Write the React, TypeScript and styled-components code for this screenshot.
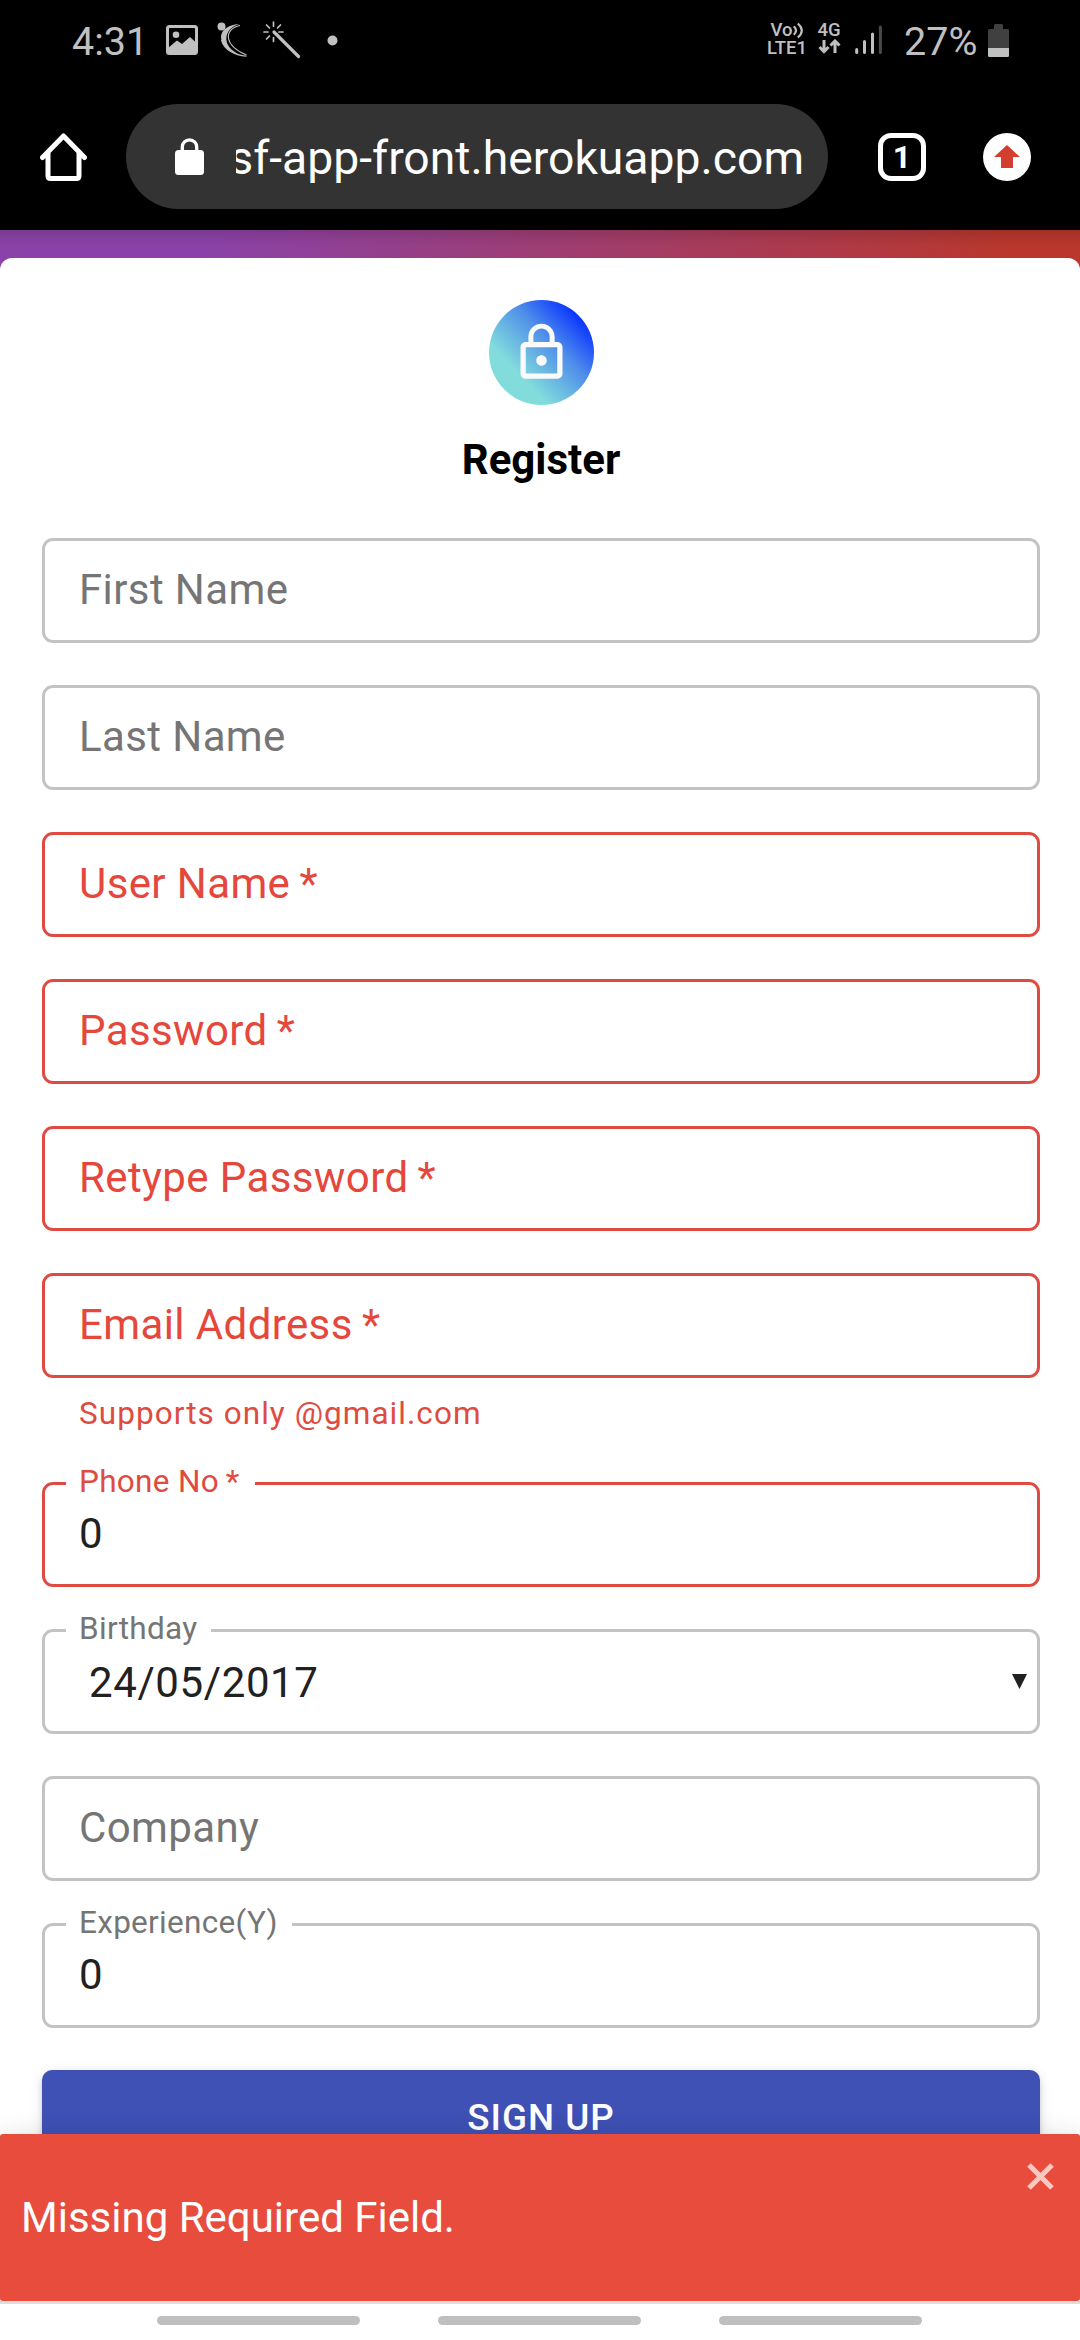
import React from "react";
import styled, { createGlobalStyle } from "styled-components";

const GlobalStyle = createGlobalStyle`
  * { box-sizing: border-box; }
  body { margin: 0; background: #fff; font-family: Roboto, "Noto Sans", sans-serif; }
`;

const Screen = styled.div`
  position: relative;
  display: flex;
  flex-direction: column;
  width: 1080px;
  height: 2340px;
  overflow: hidden;
  background: #fff;
`;

/* ---------- status bar ---------- */

const StatusBar = styled.header`
  display: flex;
  justify-content: space-between;
  height: 84px;
  padding: 0 71px 0 72px;
  flex: none;
  background: #000;
  color: #c0c0c0;
`;

const StatusGroup = styled.div`
  display: flex;
  align-items: center;
  height: 80px;
`;

const StatusText = styled.span<{ $width: number; $indent?: number }>`
  width: ${(p) => p.$width}px;
  font-size: 39.5px;
  line-height: 46px;
  padding: 4px 0 0 ${(p) => p.$indent ?? 0}px;
  white-space: nowrap;
`;

const StatusIcon = styled.svg<{ $left?: number }>`
  display: block;
  flex: none;
  margin-left: ${(p) => p.$left ?? 0}px;
`;

const NetworkStack = styled.div<{ $width: number; $left?: number }>`
  display: flex;
  flex-direction: column;
  align-items: center;
  width: ${(p) => p.$width}px;
  margin-left: ${(p) => p.$left ?? 0}px;
  height: 38px;
  font-size: 18.5px;
  font-weight: 500;
  line-height: 18px;
  white-space: nowrap;
`;

const NetworkLine = styled.div`
  display: flex;
  align-items: center;
  height: 18px;
`;

/* ---------- browser bar ---------- */

const BrowserBar = styled.nav`
  display: flex;
  align-items: center;
  height: 146px;
  padding: 0 48px 1px 40px;
  flex: none;
  background: #000;
`;

const AddressPill = styled.div`
  display: flex;
  align-items: center;
  flex: none;
  width: 702px;
  height: 105px;
  margin-left: 39px;
  padding-left: 49px;
  border-radius: 53px;
  background: #333;
`;

const AddressText = styled.div`
  display: flex;
  justify-content: flex-end;
  width: 568px;
  margin-left: 32px;
  overflow: hidden;
  color: #fff;
  font-size: 46.3px;
  line-height: 56px;
  padding-top: 3px;
  white-space: nowrap;
`;

const TabCount = styled.div`
  display: flex;
  align-items: center;
  justify-content: center;
  width: 48px;
  height: 48px;
  margin-left: 50px;
  border: 5px solid #fff;
  border-radius: 13px;
  color: #fff;
  font-size: 32px;
  font-weight: 700;
  line-height: 36px;
`;

const UpdateBadge = styled.div`
  display: flex;
  align-items: center;
  justify-content: center;
  width: 48px;
  height: 48px;
  margin-left: 57px;
  border-radius: 50%;
  background: #fff;
`;

/* ---------- page ---------- */

const Page = styled.main`
  flex: 1;
  min-height: 0;
  padding-top: 28px;
  overflow: hidden;
  background: linear-gradient(rgba(0, 0, 0, 0.12), rgba(0, 0, 0, 0) 16px) no-repeat,
    linear-gradient(92deg, #8a42a8 18%, #b9372d 87%);
`;

const Card = styled.section`
  display: flex;
  flex-direction: column;
  align-items: center;
  height: 2100px;
  padding: 42px 40px 0 42px;
  border-radius: 12px;
  background: #fff;
`;

const Avatar = styled.div`
  display: flex;
  align-items: center;
  justify-content: center;
  width: 105px;
  height: 105px;
  flex: none;
  border-radius: 50%;
  background: linear-gradient(46deg, #82dcdc 29%, #4f8eea 60%, #0a36ff 85%);
`;

const Title = styled.h1`
  height: 62px;
  margin: 27px 0 44px;
  flex: none;
  color: #000;
  font-size: 42px;
  font-weight: 700;
  line-height: 56px;
`;

const Form = styled.form`
  display: flex;
  flex-direction: column;
  width: 100%;
  gap: 42px;
`;

const FieldBox = styled.div<{ $error?: boolean }>`
  position: relative;
  display: flex;
  align-items: flex-start;
  justify-content: space-between;
  height: 105px;
  padding: 24px 10px 0 34px;
  flex: none;
  border: 3px solid ${(p) => (p.$error ? "#df4b40" : "#c3c3c3")};
  border-radius: 11px;
  background: #fff;
`;

const FieldText = styled.span<{ $tone: "label" | "error" | "value"; $date?: boolean }>`
  padding: ${(p) => (p.$date ? "2px 0 0 10px" : "0")};
  color: ${(p) => ({ label: "#757575", error: "#e5473c", value: "#212121" })[p.$tone]};
  font-size: 42px;
  line-height: 49px;
  letter-spacing: ${(p) => (p.$date ? "0.6px" : "0.394px")};
  white-space: pre;
`;

const FloatingLabel = styled.span<{ $error?: boolean; $width: number }>`
  position: absolute;
  top: -23px;
  left: 21px;
  width: ${(p) => p.$width}px;
  padding-left: 13px;
  background: #fff;
  color: ${(p) => (p.$error ? "#df4b40" : "#757575")};
  font-size: 31.5px;
  line-height: 40px;
  letter-spacing: 0.3px;
  white-space: pre;
`;

const RequiredMark = styled.span`
  margin-left: -0.04em;
`;

const HelperText = styled.p`
  height: 62px;
  margin: 0;
  padding: 15px 0 0 37px;
  color: #df4b40;
  font-size: 31.5px;
  line-height: 42px;
  letter-spacing: 1.05px;
`;

const FieldGroup = styled.div`
  display: flex;
  flex-direction: column;
  height: 167px;
`;

const DropArrow = styled.svg`
  display: block;
  margin-top: 18px;
`;

const SubmitButton = styled.button`
  height: 96px;
  padding: 0;
  border: 0;
  border-radius: 10px;
  background: #3f51b5;
  box-shadow: 0 8px 3px -5px rgba(0, 0, 0, 0.2), 0 5px 5px rgba(0, 0, 0, 0.14),
    0 3px 13px rgba(0, 0, 0, 0.12);
  color: #fff;
  font-family: inherit;
  font-size: 36.75px;
  font-weight: 500;
  line-height: 64px;
  letter-spacing: 1.05px;
`;

/* ---------- toast and system navigation ---------- */

const Toast = styled.div`
  position: absolute;
  top: 2134px;
  left: 0;
  display: flex;
  align-items: center;
  justify-content: space-between;
  width: 1080px;
  height: 167px;
  padding: 0 26px 0 21px;
  border-radius: 3px;
  background: #e74c3c;
  box-shadow: 0 3px 26px rgba(0, 0, 0, 0.1), 0 5px 39px rgba(0, 0, 0, 0.05);
`;

const ToastText = styled.div`
  color: #fff;
  font-size: 42px;
  line-height: 50px;
`;

const ToastClose = styled.svg`
  display: block;
  align-self: flex-start;
  margin-top: 29px;
`;

const SystemNav = styled.footer`
  position: absolute;
  bottom: 0;
  left: 0;
  display: flex;
  gap: 78px;
  width: 1080px;
  height: 39px;
  padding: 12px 157px 0;
  border-top: 3px solid #e0dcdc;
  background: #fff;
`;

const NavHandle = styled.span`
  width: 203px;
  height: 9px;
  border-radius: 5px;
  background: #bfbfbf;
`;

type FieldProps = {
  label: string;
  required?: boolean;
  value?: string;
  error?: boolean;
  notch?: number;
  date?: boolean;
};

function Field({ label, required, value, error, notch = 0, date }: FieldProps) {
  const caption = (
    <>
      {label}
      {required && <RequiredMark>{" *"}</RequiredMark>}
    </>
  );
  return (
    <FieldBox $error={error}>
      {value === undefined ? (
        <FieldText $tone={error ? "error" : "label"}>{caption}</FieldText>
      ) : (
        <>
          <FloatingLabel $error={error} $width={notch}>
            {caption}
          </FloatingLabel>
          <FieldText $tone="value" $date={date}>
            {value}
          </FieldText>
        </>
      )}
      {date && (
        <DropArrow width="15" height="15" viewBox="0 0 15 15">
          <path d="M0 0h15L7.500 15z" fill="#212121" />
        </DropArrow>
      )}
    </FieldBox>
  );
}

export default function App() {
  return (
    <>
      <GlobalStyle />
      <Screen>
        <StatusBar>
          <StatusGroup>
            <StatusText $width={94}>4:31</StatusText>
            <StatusIcon width="32" height="30" viewBox="0 0 32 30">
              <rect x="1.5" y="1.5" width="29" height="27" rx="2" fill="none" stroke="#c0c0c0" strokeWidth="3" />
              <circle cx="10" cy="9.700" r="3.300" fill="#c0c0c0" />
              <path d="M2 23l9-7.500 5 3.500 8-7 6 5.500V28H2z" fill="#c0c0c0" />
            </StatusIcon>
            <StatusIcon $left={19} width="32" height="36" viewBox="0 0 32 36">
              <circle cx="4.500" cy="4.500" r="4" fill="#c0c0c0" />
              <path
                d="M22.500 2C14 2 4 7 4 15c0 9 9 15.500 19 18C15 29 8 23 9.500 14.500 11 7.500 16 4 22.500 2z"
                fill="#c0c0c0"
              />
              <path
                d="M23 3.500C15 5 10.500 10 11.500 16.500 13 24 20 29 29.500 33M4.500 18C7 28 18 33 29.500 34.300"
                fill="none"
                stroke="#c0c0c0"
                strokeWidth="1.100"
              />
            </StatusIcon>
            <StatusIcon $left={14} width="38" height="38" viewBox="0 0 38 38">
              <g stroke="#c0c0c0" strokeLinecap="round" fill="none">
                <path d="M11 11L35.500 35.500" strokeWidth="3.200" />
                <path
                  d="M10.500 1.200v4M10.500 16.500v4M1 11h4M16 11h4M3.500 4l3 3M17.500 4l-3 3M3.500 18l3-3"
                  strokeWidth="1.700"
                />
              </g>
            </StatusIcon>
            <StatusIcon $left={26} width="11" height="11" viewBox="0 0 11 11">
              <circle cx="5.500" cy="5.500" r="5" fill="#c0c0c0" />
            </StatusIcon>
          </StatusGroup>
          <StatusGroup>
            <NetworkStack $width={40}>
              <NetworkLine>
                Vo
                <svg width="11" height="17" viewBox="0 0 11 17">
                  <path
                    d="M0.800 4.200q4.400 4.300 0 8.600M4.800 1.500q8 7 0 14"
                    fill="none"
                    stroke="#c0c0c0"
                    strokeWidth="2.200"
                  />
                </svg>
              </NetworkLine>
              <NetworkLine>LTE1</NetworkLine>
            </NetworkStack>
            <NetworkStack $width={24} $left={10}>
              <NetworkLine>4G</NetworkLine>
              <svg width="23" height="15" viewBox="0 0 23 15">
                <path
                  d="M6 1v12M1.500 8L6 12.700 10.500 8M17 14V2M12.500 6.500L17 2l4.500 4.500"
                  fill="none"
                  stroke="#c0c0c0"
                  strokeWidth="3"
                />
              </svg>
            </NetworkStack>
            <StatusIcon $left={14} width="28" height="30" viewBox="0 0 28 30">
              <g strokeWidth="3" strokeLinecap="round" stroke="#c0c0c0">
                <path d="M1.700 24.500v3M9.500 16.500v11M17.500 9v18.500" />
                <path d="M25.400 2v25.500" stroke="#4a4a4a" />
              </g>
            </StatusIcon>
            <StatusText $width={105} $indent={21}>
              27%
            </StatusText>
            <StatusIcon width="21" height="33" viewBox="0 0 21 33">
              <path d="M6 5V1.500Q6 0 7.500 0h6Q15 0 15 1.500V5h4.500Q21 5 21 6.500V24H0V6.500Q0 5 1.500 5z" fill="#404040" />
              <path d="M0 24h21v7.500q0 1.500-1.500 1.500h-18Q0 33 0 31.500z" fill="#c0c0c0" />
            </StatusIcon>
          </StatusGroup>
        </StatusBar>

        <BrowserBar>
          <svg width="47" height="48" viewBox="0 0 47 48">
            <path
              d="M2.500 24.500L23.500 3l21 21.500M8 20v23q0 2.500 2.500 2.500h26Q39 45.500 39 43V20"
              fill="none"
              stroke="#fff"
              strokeWidth="5"
              strokeLinecap="round"
              strokeLinejoin="round"
            />
          </svg>
          <AddressPill>
            <svg width="29" height="37" viewBox="0 0 29 37">
              <rect y="12" width="29" height="25" rx="3.500" fill="#fff" />
              <path d="M7.300 14V9a7.200 7.200 0 0 1 14.400 0v5" fill="none" stroke="#fff" strokeWidth="3.300" />
            </svg>
            <AddressText>sf-app-front.herokuapp.com</AddressText>
          </AddressPill>
          <TabCount>1</TabCount>
          <UpdateBadge>
            <svg width="26" height="23" viewBox="0 0 26 23">
              <path d="M13 0l13 12h-7v11H7V12H0z" fill="#d43e2f" />
            </svg>
          </UpdateBadge>
        </BrowserBar>

        <Page>
          <Card>
            <Avatar>
              <svg width="63" height="63" viewBox="0 0 24 24" fill="#fafafa">
                <path d="M12 17c1.100 0 2-.9 2-2s-.9-2-2-2-2 .9-2 2 .9 2 2 2zm6-9h-1V6c0-2.760-2.240-5-5-5S7 3.240 7 6v2H6c-1.100 0-2 .9-2 2v10c0 1.100.9 2 2 2h12c1.100 0 2-.9 2-2V10c0-1.100-.9-2-2-2zM8.900 6c0-1.710 1.390-3.100 3.100-3.100s3.100 1.390 3.100 3.100v2H8.900V6zM18 20H6V10h12v10z" />
              </svg>
            </Avatar>
            <Title>Register</Title>
            <Form>
              <Field label="First Name" />
              <Field label="Last Name" />
              <Field label="User Name" required error />
              <Field label="Password" required error />
              <Field label="Retype Password" required error />
              <FieldGroup>
                <Field label="Email Address" required error />
                <HelperText>Supports only @gmail.com</HelperText>
              </FieldGroup>
              <Field label="Phone No" required value="0" error notch={189} />
              <Field label="Birthday" value="24/05/2017" notch={145} date />
              <Field label="Company" />
              <Field label="Experience(Y)" value="0" notch={226} />
              <SubmitButton type="button">SIGN UP</SubmitButton>
            </Form>
          </Card>
        </Page>

        <Toast>
          <ToastText>Missing Required Field.</ToastText>
          <ToastClose width="27" height="27" viewBox="0 0 27 27">
            <path d="M2 2l23 23M25 2L2 25" stroke="#f9c8c3" strokeWidth="5.200" />
          </ToastClose>
        </Toast>
        <SystemNav>
          <NavHandle />
          <NavHandle />
          <NavHandle />
        </SystemNav>
      </Screen>
    </>
  );
}
